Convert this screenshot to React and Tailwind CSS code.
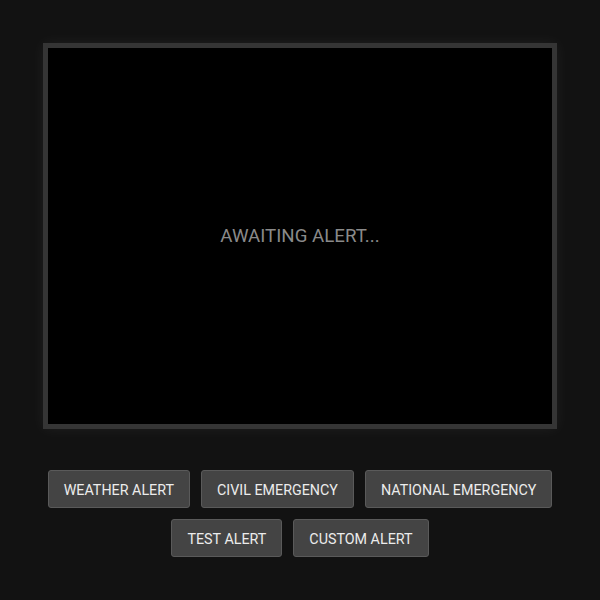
const alerts = [
  "WEATHER ALERT",
  "CIVIL EMERGENCY",
  "NATIONAL EMERGENCY",
  "TEST ALERT",
  "CUSTOM ALERT",
]

const App = () => {
  return (
    <div className="min-h-screen w-full bg-[#121212] flex flex-col items-center pt-[43px] font-['Roboto',sans-serif]">
      <div className="w-[514px] h-[386px] bg-black border-[5px] border-[#353535] shadow-[0_0_14px_rgba(255,255,255,0.06)] flex items-center justify-center">
        <p className="text-[18.7px] text-[#8a8a8a]">AWAITING ALERT...</p>
      </div>
      <div className="w-[514px] mt-[41px] flex flex-wrap justify-center gap-x-[11px] gap-y-[11px]">
        {alerts.map((label) => (
          <button
            key={label}
            className="px-[15px] pt-[10px] pb-[8px] leading-[18px] text-[14.3px] text-[#ececec] bg-[#444444] border border-[#5a5a5a] rounded-[3px]"
          >
            {label}
          </button>
        ))}
      </div>
    </div>
  )
}

export default App
